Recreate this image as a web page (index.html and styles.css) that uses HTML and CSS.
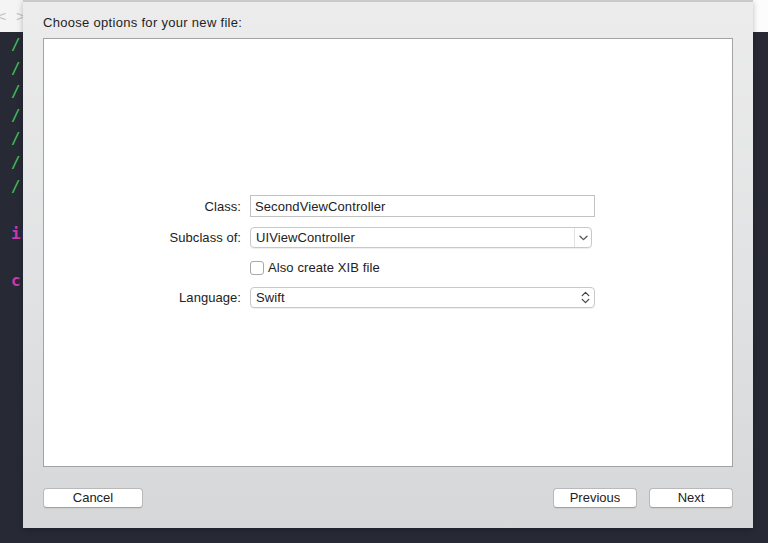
FILE: index.html
```
<!DOCTYPE html>
<html>
<head>
<meta charset="utf-8">
<link rel="stylesheet" href="styles.css">
</head>
<body>
<div class="editor">
  <div class="tabbar">
    <span class="nav">&lt;</span><span class="nav">&gt;</span>
    <span class="tab-right"></span>
  </div>
  <div class="code">
    <div class="line cmt">//</div>
    <div class="line cmt">//  ViewController.swift</div>
    <div class="line cmt">//  App</div>
    <div class="line cmt">//</div>
    <div class="line cmt">//  Created by Developer.</div>
    <div class="line cmt">//  Copyright © 2017.</div>
    <div class="line cmt">//</div>
    <div class="line">&nbsp;</div>
    <div class="line"><span class="kw">import</span> UIKit</div>
    <div class="line">&nbsp;</div>
    <div class="line"><span class="kw">class</span> ViewController {</div>
  </div>
</div>

<div class="sheet">
  <div class="title">Choose options for your new file:</div>
  <div class="panel">
    <div class="form">
      <label class="lbl">Class:</label>
      <div class="textfield">SecondViewController</div>

      <label class="lbl">Subclass of:</label>
      <div class="popup combo">
        <span class="val">UIViewController</span>
        <span class="combo-btn">
          <svg width="9" height="6" viewBox="0 0 9 6"><path d="M1 1.2 L4.5 4.6 L8 1.2" fill="none" stroke="#555" stroke-width="1.3" stroke-linecap="round" stroke-linejoin="round"/></svg>
        </span>
      </div>

      <span></span>
      <div class="check-row"><span class="checkbox"></span><span class="check-text">Also create XIB file</span></div>

      <label class="lbl">Language:</label>
      <div class="popup">
        <span class="val">Swift</span>
        <span class="updown">
          <svg width="9" height="13" viewBox="0 0 9 13"><path d="M1.2 4.6 L4.5 1.4 L7.8 4.6 M1.2 8.4 L4.5 11.6 L7.8 8.4" fill="none" stroke="#444" stroke-width="1.3" stroke-linecap="round" stroke-linejoin="round"/></svg>
        </span>
      </div>
    </div>
  </div>
  <div class="footer">
    <button class="btn btn-cancel">Cancel</button>
    <div class="right-btns">
      <button class="btn btn-nav">Previous</button>
      <button class="btn btn-nav">Next</button>
    </div>
  </div>
</div>
</body>
</html>
```

FILE: styles.css
```
html, body {
  margin: 0;
  padding: 0;
  overflow: hidden;
}
body {
  width: 768px;
  height: 543px;
  background: #272a35;
  position: relative;
  font-family: "Liberation Sans", Arial, sans-serif;
}
.editor {
  display: flex;
  flex-direction: column;
}
.tabbar {
  height: 32px;
  background: #f4f4f4;
  display: flex;
  align-items: center;
  font-family: "DejaVu Sans", sans-serif;
  font-size: 14px;
  color: #c4c4c4;
}
.nav {
  display: inline-block;
  width: 20px;
  text-align: center;
}
.nav:first-child {
  margin-left: -9px;
}
.tab-right {
  flex: 1;
  align-self: stretch;
  background: #fcfcfc;
}
.code {
  padding: 1px 0 0 11px;
  font-family: "DejaVu Sans Mono", monospace;
  font-size: 16px;
  letter-spacing: 1.5px;
  line-height: 23.6px;
  color: #e6e6e6;
}
.line {
  white-space: pre;
}
.cmt {
  color: #41c15b;
}
.kw {
  color: #c53aac;
  font-weight: bold;
}

.sheet {
  position: absolute;
  left: 23px;
  top: 0;
  width: 730px;
  height: 528px;
  box-sizing: border-box;
  border-top: 2px solid #c9c9c9;
  background: linear-gradient(#ececec, #e2e3e4 50%, #d6d7d9);
  padding: 0 20px 20px;
  display: flex;
  flex-direction: column;
  box-shadow: 0 2px 6px rgba(0,0,0,0.25);
}
.title {
  height: 36px;
  box-sizing: border-box;
  padding-top: 13px;
  font-size: 13px;
  color: #1f1f1f;
  letter-spacing: 0.3px;
}
.panel {
  height: 429px;
  box-sizing: border-box;
  background: #fff;
  border: 1px solid #a3a3a3;
}
.form {
  display: grid;
  grid-template-columns: 197px 345px;
  grid-template-rows: 22px 21px 19px 21px;
  column-gap: 9px;
  row-gap: 10px;
  padding-top: 156px;
  font-size: 13px;
  color: #222;
}
.lbl {
  text-align: right;
  align-self: center;
  letter-spacing: 0.05px;
}
.textfield {
  box-sizing: border-box;
  border: 1px solid #c2c2c2;
  padding: 0 4px;
  display: flex;
  align-items: center;
  letter-spacing: 0.1px;
}
.popup {
  box-sizing: border-box;
  border: 1px solid #c8c8c8;
  border-radius: 4px;
  display: flex;
  align-items: center;
  padding-left: 5px;
  box-shadow: 0 1px 0 rgba(0,0,0,0.06);
}
.combo {
  width: 342px;
}
.val {
  flex: 1;
  letter-spacing: 0.1px;
}
.combo-btn {
  width: 16px;
  align-self: stretch;
  border-left: 1px solid #e2e2e2;
  display: flex;
  align-items: center;
  justify-content: center;
}
.updown {
  width: 16px;
  display: flex;
  align-items: center;
  justify-content: center;
  padding-right: 1px;
}
.check-row {
  display: flex;
  align-items: center;
}
.checkbox {
  width: 14px;
  height: 14px;
  box-sizing: border-box;
  border: 1px solid #a9a9a9;
  border-radius: 3px;
  background: #fff;
  margin-right: 4px;
}
.check-text {
  letter-spacing: 0.1px;
}
.footer {
  margin-top: 21px;
  display: flex;
  justify-content: space-between;
}
.right-btns {
  display: flex;
  gap: 12px;
}
.btn {
  height: 20px;
  box-sizing: border-box;
  background: #fff;
  border: 1px solid #b9b9b9;
  border-bottom-color: #a2a2a2;
  border-radius: 4px;
  font-family: "Liberation Sans", Arial, sans-serif;
  font-size: 13px;
  color: #222;
  padding: 0;
  line-height: 18px;
  box-shadow: 0 1px 0 rgba(0,0,0,0.05);
}
.btn-cancel {
  width: 100px;
}
.btn-nav {
  width: 84px;
}
```
